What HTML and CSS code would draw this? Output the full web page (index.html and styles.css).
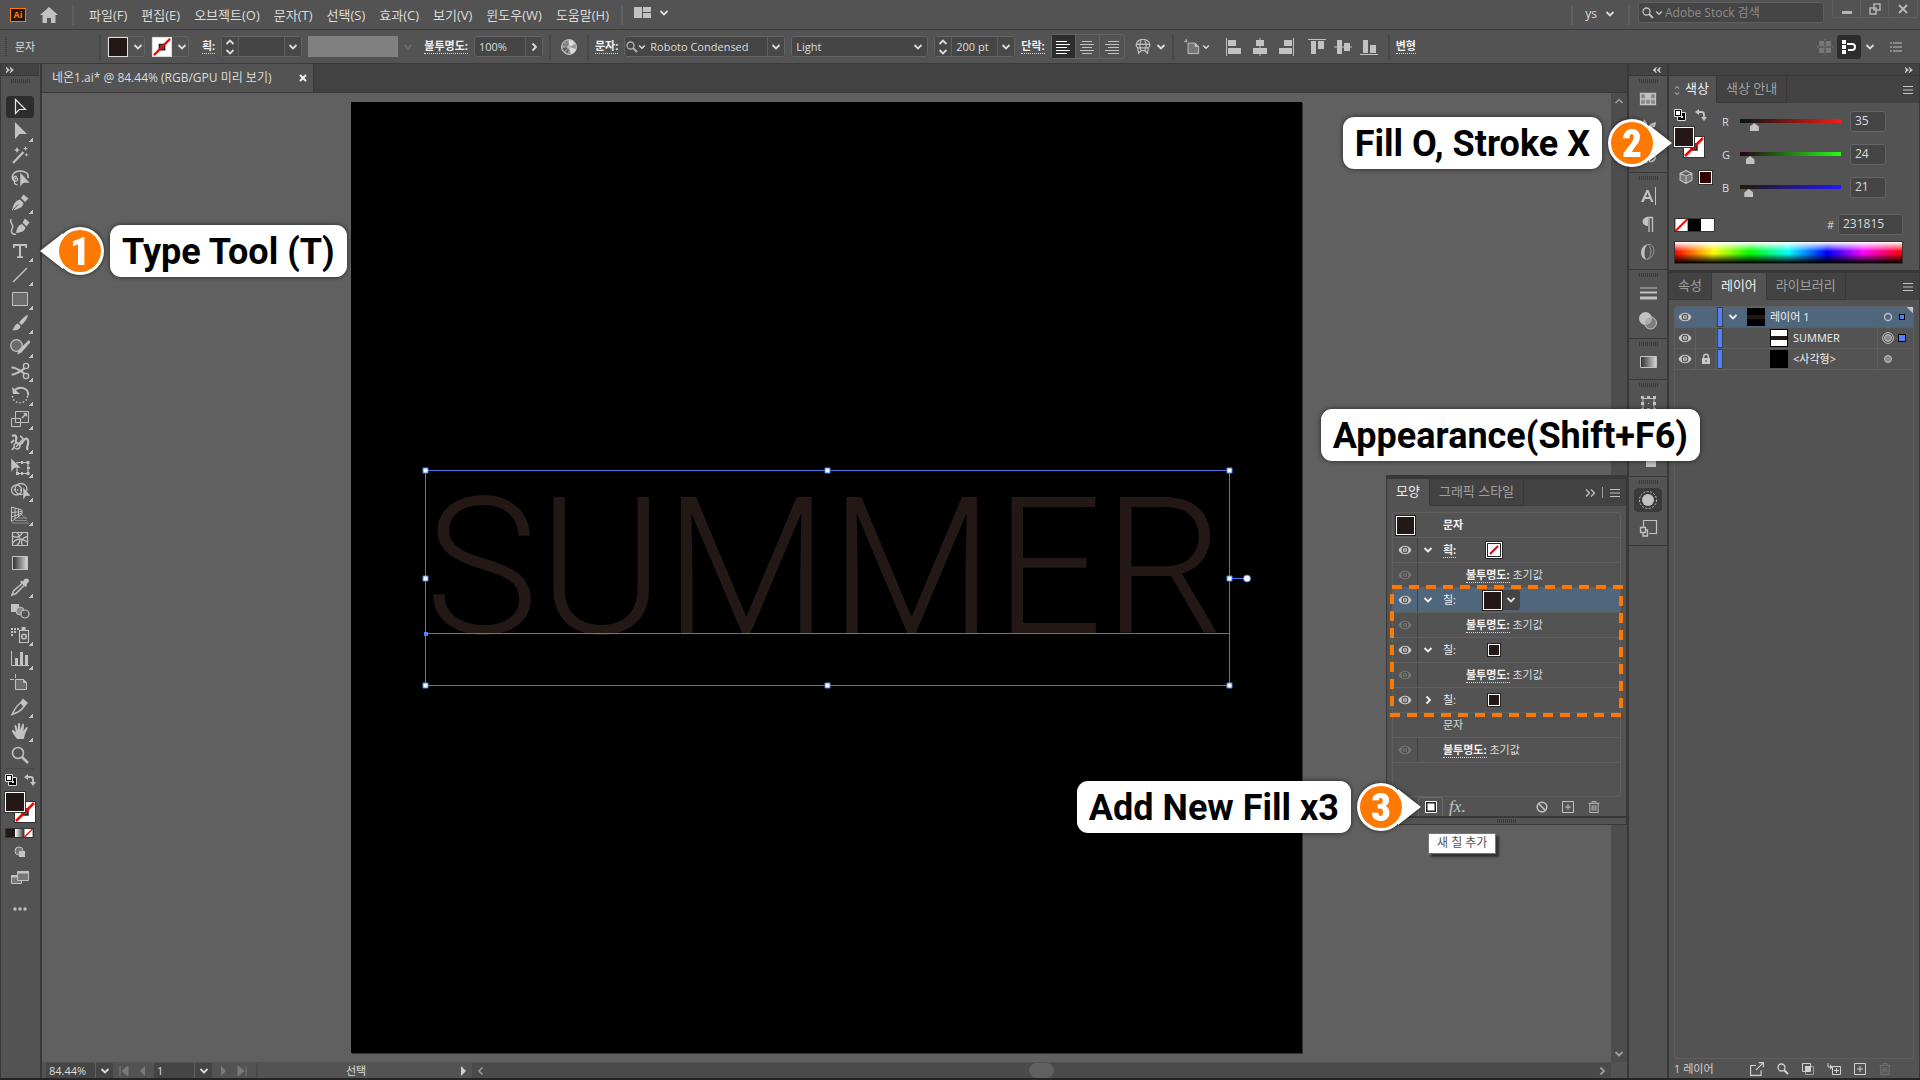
FILE: index.html
```html
<!DOCTYPE html>
<html lang="ko">
<head>
<meta charset="utf-8">
<title>네온1.ai</title>
<link rel="stylesheet" href="styles.css">
</head>
<body>
<svg class="sprite" aria-hidden="true">
  <defs>
    <linearGradient id="g-dark"><stop offset="0" stop-color="#2e2e2e"/><stop offset="1" stop-color="#d8d8d8"/></linearGradient>
  </defs>
  <symbol id="chev" viewBox="0 0 10 10"><path d="M1.500 3l3.500 3.500L8.500 3" fill="none" stroke="currentColor" stroke-width="1.800"/></symbol>
  <symbol id="chev-r" viewBox="0 0 10 10"><path d="M3.500 1.500L7 5 3.500 8.500" fill="none" stroke="currentColor" stroke-width="1.800"/></symbol>
  <symbol id="chev-l" viewBox="0 0 10 10"><path d="M6.500 1.500L3 5l3.500 3.500" fill="none" stroke="currentColor" stroke-width="1.500"/></symbol>
  <symbol id="chev-u" viewBox="0 0 10 10"><path d="M1.500 7L5 3.500 8.500 7" fill="none" stroke="currentColor" stroke-width="1.500"/></symbol>
  <symbol id="updown" viewBox="0 0 10 18"><path d="M1.500 6L5 2.500 8.500 6M1.500 12L5 15.500 8.500 12" fill="none" stroke="currentColor" stroke-width="1.800"/></symbol>
  <symbol id="search" viewBox="0 0 12 12"><circle cx="4.500" cy="4.500" r="3.500" fill="none" stroke="currentColor" stroke-width="1.300"/><path d="M7 7l4 4" stroke="currentColor" stroke-width="2"/></symbol>
  <symbol id="menu" viewBox="0 0 10 8"><path d="M0 .5h10M0 4h10M0 7.500h10" stroke="currentColor"/></symbol>
  <symbol id="dbl-r" viewBox="0 0 8 6"><path d="M0 0l3.500 3L0 6l1.200-3zM4 0l3.500 3L4 6l1.200-3z" fill="currentColor" stroke="currentColor" stroke-width=".5"/></symbol>
  <symbol id="dbl-l" viewBox="0 0 8 6"><path d="M3.500 0L0 3l3.500 3-1.200-3zM7.500 0L4 3l3.500 3-1.200-3z" fill="currentColor" stroke="currentColor" stroke-width=".5"/></symbol>
  <symbol id="eye" viewBox="0 0 14 10"><path d="M.5 5C3-.8 11-.8 13.500 5 11 10.800 3 10.800 .5 5z" fill="currentColor"/><circle cx="7" cy="5" r="3.300" fill="#4a4a4a"/><circle cx="7" cy="5" r="2.200" fill="currentColor"/><path d="M6.500 3.500h1v3h-1z" fill="#4a4a4a"/></symbol>
  <symbol id="lock" viewBox="0 0 10 12"><path d="M1 5h8v6H1z" fill="currentColor"/><path d="M2.700 5V3.500a2.300 2.300 0 0 1 4.600 0V5" fill="none" stroke="currentColor" stroke-width="1.400"/><path d="M4.500 7h1v2h-1z" fill="#444"/></symbol>
  <symbol id="defcol" viewBox="0 0 12 12"><path d="M4.500 4.500h6.500v6.500H4.500z" fill="#fff" stroke="#000" stroke-width="2"/><path d="M3.500 3.500h8v8h-8z" fill="#000" stroke="#ddd"/><path d="M7 7h2v2H7z" fill="#ddd"/><path d="M.5 .5h7v7h-7z" fill="#000" stroke="#ddd"/><path d="M2 2h4v4H2z" fill="#fff"/></symbol>
  <symbol id="swap" viewBox="0 0 12 12"><path d="M3 3h3.500a2.500 2.500 0 0 1 2.500 2.500V9" fill="none" stroke="currentColor" stroke-width="1.800"/><path d="M0 3l4-3v6zM9 12L6 8h6z" fill="currentColor"/></symbol>
  <symbol id="grip" viewBox="0 0 19 4"><path d="M.5 0v4M2.500 0v4M4.500 0v4M6.500 0v4M8.500 0v4M10.500 0v4M12.500 0v4M14.500 0v4M16.500 0v4M18.500 0v4" stroke="#3a3a3a"/></symbol>
  <symbol id="none" viewBox="0 0 20 20"><path d="M0 0h20v20H0z" fill="#fff"/><path d="M7 7h6v6H7z" fill="#535353" stroke="#222" stroke-width="1.500"/><path d="M1 19L19 1" stroke="#f00" stroke-width="2.500"/></symbol>
  <symbol id="slash" viewBox="0 0 12 12"><path d="M0 0h12v12H0z" fill="#fff"/><path d="M0 12L12 0" stroke="#f00" stroke-width="2"/></symbol>
  <symbol id="plusbox" viewBox="0 0 12 12"><path d="M.5 .5h11v11H.5zM6 3v6M3 6h6" fill="none" stroke="currentColor"/></symbol>
  <symbol id="trash" viewBox="0 0 12 13"><path d="M0 2.500h12M4 2V.5h4V2M1.500 3v9.500h9V3M4 4.500v6M6 4.500v6M8 4.500v6" fill="none" stroke="currentColor"/></symbol>
  <!-- drawing tools, 20 x 20 -->
  <symbol id="t1" viewBox="0 0 20 20"><path d="M5.500 2.500v14l3.700-4H15.500z" fill="none" stroke="currentColor" stroke-width="1.200"/></symbol>
  <symbol id="t2" viewBox="0 0 20 20"><path d="M5 1v17l4.500-5H17z" fill="currentColor"/></symbol>
  <symbol id="t3" viewBox="0 0 20 20"><path d="M3 18L13.500 7" stroke="currentColor" stroke-width="2.200"/><path d="M7 2l1 2.200L10 5l-2 1-1 2-1-2-2-1 2-.8zM15.500 1l.7 1.800 1.800.7-1.800.7-.7 1.800-.7-1.800-1.800-.7 1.800-.7zM16.500 8l.6 1.200 1.200.6-1.200.6-.6 1.200-.6-1.200-1.200-.6 1.200-.6z" fill="currentColor"/></symbol>
  <symbol id="t4" viewBox="0 0 20 20"><path d="M4 12C0 7 4 2 10 2s9 3 8 7" fill="none" stroke="currentColor" stroke-width="1.600"/><path d="M7 7.500C4 6.500 2.500 9 4 11s4 1 3.500-1-2.500-1-2.300.3M4.500 12c-.5 3 1 4 3 3.500" fill="none" stroke="currentColor" stroke-width="1.300"/><path d="M10 3v15l3.500-4H20z" fill="currentColor" stroke="#535353" stroke-width=".5"/></symbol>
  <symbol id="t5" viewBox="0 0 20 20"><path d="M2 17.500C3.500 12 4 8.500 10 6.500l3.500 3.500C13 15 8 16 2 17.500z" fill="currentColor"/><path d="M11 5l2.500-3.500 5 4L15 9z" fill="currentColor"/><path d="M3 17l5-5.500" stroke="#535353"/></symbol>
  <symbol id="t6" viewBox="0 0 20 20"><path d="M6 16c1-5 2-7.500 6-9l3.500 3.500C15 14 11 15.500 6 16z" fill="currentColor"/><path d="M12.500 5.500L15 1.500l4.500 4-3 4z" fill="currentColor"/><path d="M1 2c-2 5 4 5 1 10-1.500 3 .5 6 4 5" fill="none" stroke="currentColor" stroke-width="1.400"/></symbol>
  <symbol id="t7" viewBox="0 0 20 20"><path d="M3 3h14v4h-1.500L15 5h-4v10l2 .5V17H7v-1.500l2-.5V5H5l-.5 2H3z" fill="currentColor"/></symbol>
  <symbol id="t8" viewBox="0 0 20 20"><path d="M3 17L17 3" stroke="currentColor" stroke-width="1.500"/></symbol>
  <symbol id="t9" viewBox="0 0 20 20"><path d="M2.500 3.500h15v13h-15z" fill="#6c6c6c" stroke="currentColor"/></symbol>
  <symbol id="t10" viewBox="0 0 20 20"><path d="M17.500 2C19 3 15 9 11.500 12L9 9.500C12 6 16 2 17.500 2z" fill="currentColor"/><path d="M8 10.500l2.500 2.500C10 17 6 18 2 17c2.500-1 2-5.500 6-6.500z" fill="currentColor"/></symbol>
  <symbol id="t11" viewBox="0 0 20 20"><circle cx="6.500" cy="8.500" r="5.800" fill="#6c6c6c" stroke="currentColor" stroke-width="1.300"/><path d="M19 3l1.500 2-9 10.500-4 2 .5-4z" fill="currentColor"/></symbol>
  <symbol id="t12" viewBox="0 0 20 20"><path d="M1.500 6.500c4-.5 7 2 13 6M1.500 13.500c4 .5 7-2 13-6" stroke="currentColor" stroke-width="2" fill="none"/><circle cx="16" cy="5" r="2.600" fill="none" stroke="currentColor" stroke-width="1.400"/><circle cx="16" cy="15" r="2.600" fill="none" stroke="currentColor" stroke-width="1.400"/></symbol>
  <symbol id="t13" viewBox="0 0 20 20"><path d="M4 6c5-6 15-3 14 4.500" fill="none" stroke="currentColor" stroke-width="1.800"/><path d="M2 2l1 7h7z" fill="currentColor"/><path d="M17.500 11c0 9-15 9-15 0" fill="none" stroke="currentColor" stroke-width="1.500" stroke-dasharray="1.500 2"/></symbol>
  <symbol id="t14" viewBox="0 0 20 20"><path d="M5.500 2.500h13v11h-13z" fill="none" stroke="currentColor"/><path d="M1.500 9.500h9v8h-9z" fill="none" stroke="currentColor"/><path d="M12 9l4-4" stroke="currentColor" stroke-width="1.500"/><path d="M13 4h4v4z" fill="currentColor"/></symbol>
  <symbol id="t15" viewBox="0 0 20 20"><path d="M2 3c4-2 5 1 4 4s1 4 4 4 3-4 5-5 4 1 3 5-2 4 0 6" fill="none" stroke="currentColor" stroke-width="2.200"/><path d="M2 17c2-5 6-3 9-6M10 3c3 1 2 3 4 4M4 7L1 10" fill="none" stroke="currentColor" stroke-width="1.800"/><circle cx="7" cy="13" r="3" fill="#535353" stroke="currentColor" stroke-width="1.300"/><path d="M6 14l6-7" stroke="currentColor" stroke-width="1.300"/></symbol>
  <symbol id="t16" viewBox="0 0 20 20"><path d="M7 5.500h11v11H7z" fill="none" stroke="currentColor" stroke-width="1.200"/><path d="M6 15h3v3H6zM16.500 15h3v3h-3zM16.500 4h3v3h-3zM11 15h2v3h-2zM17 10h3v2h-3zM11 4h2v3h-2z" fill="currentColor"/><path d="M1 1v14l3.500-4H11z" fill="currentColor" stroke="#535353" stroke-width=".5"/></symbol>
  <symbol id="t17" viewBox="0 0 20 20"><circle cx="6.500" cy="9" r="5" fill="none" stroke="currentColor" stroke-width="1.300"/><ellipse cx="11" cy="8" rx="6" ry="5.500" fill="none" stroke="currentColor" stroke-width="1.300"/><path d="M4 9h9" stroke="currentColor" stroke-dasharray="1.500 1.500" stroke-width="1.500"/><path d="M13 6v13l3-4h5z" fill="currentColor" stroke="#535353" stroke-width=".5"/></symbol>
  <symbol id="t18" viewBox="0 0 20 20"><path d="M1.500 2v14.500L12 9V5zM5 3v11M8.500 4v7.500M1.500 7.500L12 6.500M1.500 12L12 8" fill="none" stroke="currentColor"/><path d="M8 13h9M5 15.500h12M2 18h17M12 10l5 4" stroke="#8d8d8d"/></symbol>
  <symbol id="t19" viewBox="0 0 20 20"><path d="M2.500 3.500h15v13h-15z" fill="none" stroke="currentColor" stroke-width="1.200"/><path d="M7 3.500c4 4 4 9 0 13M2.500 7c5 3 9-1 10-3.500M2.500 14c5-6 10-4 15-1M12.500 16.500c-3-6 1-8 5-9" fill="none" stroke="currentColor" stroke-width="1.300"/></symbol>
  <symbol id="t20" viewBox="0 0 20 20"><path d="M2.500 3.500h15v13h-15z" fill="url(#g-dark)" stroke="currentColor"/></symbol>
  <symbol id="t21" viewBox="0 0 20 20"><path d="M12 6.500L3.500 14 2 18l4-1.500L14 8.500" fill="none" stroke="currentColor" stroke-width="1.500"/><path d="M10 5l1.500-1.500 1.500 1C14 2 16 .5 18 2s.5 4-1.500 5l.5 1.500L15.500 10z" fill="currentColor"/></symbol>
  <symbol id="t22" viewBox="0 0 20 20"><path d="M1 3h8v8H1z" fill="currentColor"/><circle cx="10" cy="10" r="4" fill="#8a8a8a" stroke="currentColor"/><circle cx="15" cy="13" r="4" fill="#535353" stroke="currentColor" stroke-width="1.200"/></symbol>
  <symbol id="t23" viewBox="0 0 20 20"><path d="M1 3h2v2H1zM4 3h2v2H4zM7 3h2v2H7zM1 6h2v2H1zM4 6h2v2H4zM1 9h2v2H1zM11.500 2h4v3h-4z" fill="currentColor"/><path d="M9.500 5.500h9v12h-9z" fill="none" stroke="currentColor" stroke-width="1.200"/><circle cx="14" cy="11.500" r="2.300" fill="none" stroke="currentColor" stroke-width="1.600"/></symbol>
  <symbol id="t24" viewBox="0 0 20 20"><path d="M1.500 2v14.500H19" fill="none" stroke="currentColor"/><path d="M5 9h3v7H5zM10 3h3v13h-3zM15 6h3v10h-3z" fill="currentColor"/></symbol>
  <symbol id="t25" viewBox="0 0 20 20"><path d="M5.500 6.500h8l3 3v7h-11z" fill="#6c6c6c" stroke="currentColor"/><path d="M13.500 6.500v3h3zM0 6.500h4M5.500 1v4" fill="currentColor" stroke="currentColor"/></symbol>
  <symbol id="t26" viewBox="0 0 20 20"><path d="M11 5.500C6 9 5 12 2 17.500c5-1.500 9-3.500 12-8z" fill="none" stroke="currentColor" stroke-width="1.400"/><path d="M10.500 5L13 1.500l5 4.500-3.500 4z" fill="currentColor"/></symbol>
  <symbol id="t27" viewBox="0 0 20 20"><path d="M7 18C4 14 2 11 2 9.500c1-1 2.500 0 4 2L4.500 5c0-1.500 1.500-1.500 2 0L8 9.500V3c0-1.500 2-1.500 2 0l.5 6L12 3.500c.5-1.500 2-1 2 .5L13.500 10 16 6.500c1-1 2-.5 1.500 1L15 13c-.5 3-1 4-1.500 5z" fill="currentColor"/></symbol>
  <symbol id="t28" viewBox="0 0 20 20"><circle cx="8" cy="8" r="5.500" fill="none" stroke="currentColor" stroke-width="1.500"/><path d="M12 12l6 6" stroke="currentColor" stroke-width="2.500"/></symbol>
  <!-- panel dock icons, 20 x 20 -->
  <symbol id="d1" viewBox="0 0 20 20"><path d="M2.500 4.500h15v11h-15zM2.500 10h15M7.500 4.500v11M12.500 4.500v11" fill="#8a8a8a" stroke="currentColor" stroke-width="1.300"/><path d="M8 5h4v5H8z" fill="currentColor"/></symbol>
  <symbol id="d2" viewBox="0 0 20 20"><path d="M6 2l3 4-1 4-3-4zM12 7l6-2-1 5-5 1zM9 9l2 9H8z" fill="currentColor"/></symbol>
  <symbol id="d3" viewBox="0 0 20 20"><path d="M10 10V4M10 17c-4 1-7-1-5-4s5-1 5 1 3 4 6 1-1-6-4-3" fill="none" stroke="currentColor" stroke-width="1.800"/></symbol>
  <symbol id="d4" viewBox="0 0 20 20"><path d="M3 16L8.500 4h2L15.500 16h-2.500l-1-3H7l-1.200 3zM7.800 11H11L9.500 6.800z" fill="currentColor"/><path d="M17.500 1v18" stroke="currentColor"/></symbol>
  <symbol id="d5" viewBox="0 0 20 20"><path d="M9.500 3.500c-6 0-6 8 0 8z" fill="currentColor" stroke="currentColor"/><path d="M9 3.500h6M11 3.500V18M14.500 3.500V18" fill="none" stroke="currentColor" stroke-width="1.300"/></symbol>
  <symbol id="d6" viewBox="0 0 20 20"><path d="M10 2C1 4 1 17 9 18 5 15 6 5 10 2z" fill="currentColor"/><path d="M10 2.500c8-1 8 13-1 15C14 15 14 5 10 2.500z" fill="none" stroke="#999"/></symbol>
  <symbol id="d7" viewBox="0 0 20 20"><path d="M2 5h17" stroke="currentColor"/><path d="M2 9.500h17" stroke="currentColor" stroke-width="2"/><path d="M2 15h17" stroke="currentColor" stroke-width="3"/></symbol>
  <symbol id="d8" viewBox="0 0 20 20"><circle cx="7.500" cy="7.500" r="6.500" fill="currentColor"/><circle cx="12.500" cy="12" r="6" fill="#999" fill-opacity=".6" stroke="currentColor"/></symbol>
  <symbol id="d9" viewBox="0 0 20 20"><path d="M2.500 4.500h16v11h-16z" fill="url(#g-dark)" stroke="currentColor"/></symbol>
  <symbol id="d10" viewBox="0 0 20 20"><path d="M5 5.500h11v11H5z" fill="none" stroke="currentColor"/><path d="M3 3h3v3H3zM9 3h3v3H9zM15 3h3v3h-3zM3 9h3v3H3zM15 9h3v3h-3zM3 15h3v3H3zM9 15h3v3H9zM15 15h3v3h-3zM10 10h1v1h-1z" fill="currentColor"/></symbol>
  <symbol id="d11" viewBox="0 0 20 20"><path d="M3 3h9v9H3zM8 9h10v9H8z" fill="currentColor"/></symbol>
  <symbol id="d12" viewBox="0 0 20 20"><circle cx="10" cy="10" r="6" fill="currentColor"/><circle cx="10" cy="10" r="8.500" fill="none" stroke="currentColor" stroke-dasharray="2 1.500"/></symbol>
  <symbol id="d13" viewBox="0 0 20 20"><path d="M5.500 9V2.500h13v13H11" fill="none" stroke="currentColor" stroke-width="1.200"/><path d="M2.500 9.500h5v5h-5zM5 14.500v3.500h4.500v-6H8" fill="none" stroke="currentColor" stroke-width="1.300"/></symbol>
</svg>

<header class="menubar">
  <svg class="ai" viewBox="0 0 16 14" role="img" aria-label="Adobe Illustrator"><rect x=".5" y=".5" width="15" height="13" fill="#261300" stroke="#ff7c00"/><text x="8" y="10" text-anchor="middle">Ai</text></svg>
  <button class="plain home" aria-label="홈"><svg viewBox="0 0 18 16"><path d="M9 0l9 8h-2.500v8H11v-5H7v5H2.500V8H0z" fill="#c2c2c2"/></svg></button>
  <span class="rule"></span>
  <nav class="menus">
    <button>파일(F)</button><button>편집(E)</button><button>오브젝트(O)</button><button>문자(T)</button><button>선택(S)</button><button>효과(C)</button><button>보기(V)</button><button>윈도우(W)</button><button>도움말(H)</button>
  </nav>
  <span class="rule"></span>
  <button class="plain arrange" aria-label="문서 정렬"><svg class="w17" viewBox="0 0 17 11"><path d="M0 0h8v11H0zM9 0h8v5H9zM9 6h8v5H9z" fill="#c2c2c2"/></svg><svg class="ic10"><use href="#chev"/></svg></button>
  <span class="grow"></span>
  <span class="rule"></span>
  <button class="plain user">ys <svg class="ic10"><use href="#chev"/></svg></button>
  <span class="rule"></span>
  <label class="stock"><svg class="ic12"><use href="#search"/></svg><svg class="ic8"><use href="#chev"/></svg><input type="text" placeholder="Adobe Stock 검색" aria-label="Adobe Stock 검색"></label>
  <div class="winbtns">
    <button aria-label="최소화"><svg class="ic12" viewBox="0 0 12 12"><path d="M1 8h10v3H1z" fill="#b4b4b4"/></svg></button><button aria-label="복원"><svg class="ic12" viewBox="0 0 12 12"><path d="M5 1h6v6H5zM1 5h6v6H1z" fill="none" stroke="#b4b4b4" stroke-width="1.500"/></svg></button><button aria-label="닫기"><svg class="ic12" viewBox="0 0 12 12"><path d="M2 2l8 8M10 2l-8 8" stroke="#b4b4b4" stroke-width="2"/></svg></button>
  </div>
</header>

<section class="control" aria-label="컨트롤">
  <span class="vgrip"></span>
  <span class="kind">문자</span>
  <span class="rule"></span>
  <button class="swatchdd" aria-label="칠"><span class="chip fillc"></span><svg class="ic10"><use href="#chev"/></svg></button>
  <button class="swatchdd" aria-label="획 색"><svg class="chip"><use href="#none"/></svg><svg class="ic10"><use href="#chev"/></svg></button>
  <label class="dot gapl" for="sw">획:</label>
  <div class="combo"><button class="step" aria-label="획 두께 증감"><svg class="ud"><use href="#updown"/></svg></button><input class="w45" id="sw" type="text"><button aria-label="두께 목록"><svg class="ic10"><use href="#chev"/></svg></button></div>
  <button class="brush" disabled aria-label="브러쉬 정의"><span></span><svg class="ic10"><use href="#chev"/></svg></button>
  <label class="dot" for="op">불투명도:</label>
  <div class="combo"><input class="w50" id="op" type="text" value="100%"><button aria-label="불투명도 슬라이더"><svg class="ic10"><use href="#chev-r"/></svg></button></div>
  <span class="rule"></span>
  <button class="plain globe" aria-label="아트웍 색상 변경"><svg class="ic16" viewBox="0 0 16 16"><circle cx="8" cy="8" r="7.500" fill="#9a9a9a" stroke="#c2c2c2"/><path d="M8 8L8 1a7 7 0 0 1 6 4zM8 8l7 2a7 7 0 0 1-5 5z" fill="#dcdcdc"/><path d="M8 8l-5 4a7 7 0 0 1-1-3zM8 8l-1 6-2-1z" fill="#555"/><path d="M8 8L2 5M8 8L5 2" stroke="#666"/><circle cx="8" cy="8" r="2" fill="#bbb"/></svg></button>
  <span class="rule"></span>
  <label class="dot" for="ff">문자:</label>
  <div class="combo"><svg class="ic12 lead"><use href="#search"/></svg><svg class="ic8"><use href="#chev"/></svg><input class="w121" id="ff" type="text" value="Roboto Condensed"><button aria-label="글꼴 목록"><svg class="ic10"><use href="#chev"/></svg></button></div>
  <div class="combo"><select class="w117" aria-label="글꼴 스타일"><option>Light</option></select><svg class="ic10 tail"><use href="#chev"/></svg></div>
  <div class="combo"><button class="step" aria-label="글꼴 크기 증감"><svg class="ud"><use href="#updown"/></svg></button><input class="w45" type="text" value="200 pt" aria-label="글꼴 크기"><button aria-label="크기 목록"><svg class="ic10"><use href="#chev"/></svg></button></div>
  <button class="plain dot">단락:</button>
  <div class="aligns">
    <button class="on" aria-label="왼쪽 정렬"><svg class="ic16" viewBox="0 0 16 16"><path d="M1 2.500h11M1 5.500h14M1 8.500h11M1 11.500h14M1 14.500h11" stroke="currentColor"/></svg></button><button aria-label="가운데 정렬"><svg class="ic16" viewBox="0 0 16 16"><path d="M3 2.500h10M1 5.500h14M3 8.500h10M1 11.500h14M3 14.500h10" stroke="currentColor"/></svg></button><button aria-label="오른쪽 정렬"><svg class="ic16" viewBox="0 0 16 16"><path d="M4 2.500h11M1 5.500h14M4 8.500h11M1 11.500h14M4 14.500h11" stroke="currentColor"/></svg></button>
  </div>
  <button class="plain pair envelope" aria-label="둘러싸기"><svg class="ic16" viewBox="0 0 18 18"><path d="M4 2c3-2 7-2 10 0 4 3 3 6 1 8l-1 6-3-3H7l-3 3-1-6C1 8 0 5 4 2zM7 2c-2 3-2 7 0 11M11 2c2 3 2 7 0 11M1.500 6h15M3 10h12" fill="none" stroke="#c2c2c2" stroke-width="1.300"/></svg><svg class="ic10"><use href="#chev"/></svg></button>
  <span class="rule"></span>
  <button class="plain pair tight" aria-label="아트보드"><svg class="ic16" viewBox="0 0 18 18"><path d="M4.500 4.500h8l4 4v8h-12z" fill="#777" stroke="#c2c2c2"/><path d="M12.500 4.500v4h4zM0 2.500h4M2.500 0v4" fill="#c2c2c2" stroke="#c2c2c2"/></svg><svg class="ic8"><use href="#chev"/></svg></button>
  <div class="arranges">
    <button class="plain" aria-label="가로 왼쪽 정렬"><svg class="ic18" viewBox="0 0 18 18"><path d="M1.500 0v18" stroke="#c2c2c2"/><path d="M3 2h8v6H3zM3 10h13v6H3z" fill="#c2c2c2"/></svg></button>
    <button class="plain" aria-label="가로 가운데 정렬"><svg class="ic18" viewBox="0 0 18 18"><path d="M9 0v18" stroke="#c2c2c2"/><path d="M5 2h8v6H5zM2 10h14v6H2z" fill="#c2c2c2"/></svg></button>
    <button class="plain" aria-label="가로 오른쪽 정렬"><svg class="ic18" viewBox="0 0 18 18"><path d="M16.500 0v18" stroke="#c2c2c2"/><path d="M7 2h8v6H7zM2 10h13v6H2z" fill="#c2c2c2"/></svg></button>
    <button class="plain sp" aria-label="세로 위 정렬"><svg class="ic18" viewBox="0 0 18 18"><path d="M0 1.500h18" stroke="#c2c2c2"/><path d="M3 3h5v13H3zM10 3h6v8h-6z" fill="#c2c2c2"/></svg></button>
    <button class="plain" aria-label="세로 가운데 정렬"><svg class="ic18" viewBox="0 0 18 18"><path d="M0 9h18" stroke="#c2c2c2"/><path d="M3 2h5v14H3zM10 5h6v8h-6z" fill="#c2c2c2"/></svg></button>
    <button class="plain" aria-label="세로 아래 정렬"><svg class="ic18" viewBox="0 0 18 18"><path d="M0 16.500h18" stroke="#c2c2c2"/><path d="M3 2h5v13H3zM10 7h6v8h-6z" fill="#c2c2c2"/></svg></button>
  </div>
  <span class="rule"></span>
  <button class="plain dot">변형</button>
  <span class="grow"></span>
  <div class="ends">
    <button class="plain" aria-label="픽셀에 정렬"><svg class="ic16" viewBox="0 0 16 16"><path d="M2 2h5v5H2zM9 2h5v5H9zM2 9h5v5H2zM9 9h5v5H9z" fill="#777"/><path d="M8 0v16M0 8h16" stroke="#777" stroke-dasharray="2 1"/></svg></button>
    <button class="snap" aria-label="픽셀 물리기"><svg class="ic16" viewBox="0 0 16 16"><path d="M1 1h4v4H1zM1 6h4v4H1zM1 11h4v4H1z" fill="#fff"/><path d="M6 5h5a3 3 0 0 1 0 6H7" fill="none" stroke="#fff" stroke-width="2"/></svg></button>
    <svg class="ic10"><use href="#chev"/></svg>
    <button class="plain lists" aria-label="컨트롤 메뉴"><svg class="ic12" viewBox="0 0 12 12"><path d="M3 2h9M3 6h9M3 10h9M0 2h2M0 6h2M0 10h2" stroke="#c2c2c2" stroke-width="1.200"/></svg></button>
  </div>
</section>

<main class="work">
  <aside class="toolbar" aria-label="도구">
    <div class="strip"><svg class="dbl"><use href="#dbl-r"/></svg></div>
    <svg class="grip"><use href="#grip"/></svg>
    <div class="tools">
      <button class="on" aria-label="선택"><svg><use href="#t1"/></svg></button>
      <button class="more" aria-label="직접 선택"><svg><use href="#t2"/></svg></button>
      <button aria-label="자동 선택"><svg><use href="#t3"/></svg></button>
      <button aria-label="올가미"><svg><use href="#t4"/></svg></button>
      <button class="more" aria-label="펜"><svg><use href="#t5"/></svg></button>
      <button aria-label="곡률"><svg><use href="#t6"/></svg></button>
      <button class="more" aria-label="문자"><svg><use href="#t7"/></svg></button>
      <button class="more" aria-label="선분"><svg><use href="#t8"/></svg></button>
      <button class="more" aria-label="사각형"><svg><use href="#t9"/></svg></button>
      <button class="more" aria-label="페인트브러쉬"><svg><use href="#t10"/></svg></button>
      <button class="more" aria-label="모양"><svg><use href="#t11"/></svg></button>
      <button class="more" aria-label="가위"><svg><use href="#t12"/></svg></button>
      <button class="more" aria-label="회전"><svg><use href="#t13"/></svg></button>
      <button class="more" aria-label="크기 조절"><svg><use href="#t14"/></svg></button>
      <button class="more" aria-label="퍼펫 뒤틀기"><svg><use href="#t15"/></svg></button>
      <button class="more" aria-label="자유 변형"><svg><use href="#t16"/></svg></button>
      <button class="more" aria-label="도형 구성"><svg><use href="#t17"/></svg></button>
      <button class="more" aria-label="원근감 격자"><svg><use href="#t18"/></svg></button>
      <button aria-label="망"><svg><use href="#t19"/></svg></button>
      <button aria-label="그라디언트"><svg><use href="#t20"/></svg></button>
      <button class="more" aria-label="스포이드"><svg><use href="#t21"/></svg></button>
      <button aria-label="블렌드"><svg><use href="#t22"/></svg></button>
      <button class="more" aria-label="심볼 분무기"><svg><use href="#t23"/></svg></button>
      <button class="more" aria-label="그래프"><svg><use href="#t24"/></svg></button>
      <button aria-label="대지"><svg><use href="#t25"/></svg></button>
      <button class="more" aria-label="분할"><svg><use href="#t26"/></svg></button>
      <button class="more" aria-label="손"><svg><use href="#t27"/></svg></button>
      <button aria-label="돋보기"><svg><use href="#t28"/></svg></button>
    </div>
    <div class="colors">
      <div class="colortop"><svg class="ic12"><use href="#defcol"/></svg><svg class="ic12"><use href="#swap"/></svg></div>
      <div class="stack"><span class="fillc"></span><svg><use href="#none"/></svg></div>
      <div class="modes"><span class="fillc"></span><span class="gradc"></span><svg><use href="#slash"/></svg></div>
    </div>
    <button class="plain foot" aria-label="그리기 모드"><svg class="ic12" viewBox="0 0 12 12"><circle cx="5" cy="5" r="4" fill="#777" stroke="#c2c2c2"/><path d="M5 5h6v6H5z" fill="#c2c2c2"/></svg></button>
    <button class="plain foot" aria-label="화면 모드"><svg class="ic18" viewBox="0 0 18 18"><path d="M.5 7.500h10v8H.5z" fill="#777" stroke="#c2c2c2"/><path d="M6.500 3.500h11v9h-11z" fill="#777" stroke="#c2c2c2"/><path d="M6 4.500h12M0 8.500h6" stroke="#c2c2c2" stroke-width="2"/></svg></button>
    <button class="plain foot dots" aria-label="도구 모음 편집"><svg class="ic16" viewBox="0 0 16 16"><circle cx="3" cy="8" r="1.700" fill="#c2c2c2"/><circle cx="8" cy="8" r="1.700" fill="#c2c2c2"/><circle cx="13" cy="8" r="1.700" fill="#c2c2c2"/></svg></button>
  </aside>

  <section class="doc">
    <div class="tabs"><button class="doctab">네온1.ai* @ 84.44% (RGB/GPU 미리 보기)<svg class="ic8" viewBox="0 0 8 8"><path d="M1 1l6 6M7 1L1 7" stroke="#eee" stroke-width="2"/></svg></button></div>
    <div class="view">
      <div class="canvas">
        <div class="artboard">
          <div class="sel">
            <div class="neon">SUMMER</div>
            <svg viewBox="0 0 804 215"><g fill="none" stroke="#4676e8"><path d="M.5 .5h804v215H.5zM0 163.500h804M805 108.500h16"/></g><g fill="#fff" stroke="#4f80ff"><path d="M-2 -2h5v5h-5zM400 -2h5v5h-5zM802 -2h5v5h-5zM-2 106h5v5h-5zM802 106h5v5h-5zM-2 213h5v5h-5zM400 213h5v5h-5zM802 213h5v5h-5z"/><circle cx="822" cy="108.500" r="3.500"/></g><path d="M-1 162h4v4h-4z" fill="#4f80ff"/></svg>
          </div>
        </div>
      </div>
      <div class="vscroll"><svg class="ic10"><use href="#chev-u"/></svg><svg class="ic10"><use href="#chev"/></svg></div>
    </div>
    <div class="status">
      <div class="sfield"><input class="w49" type="text" value="84.44%" aria-label="확대/축소"><button aria-label="배율 목록"><svg class="ic10"><use href="#chev"/></svg></button></div>
      <div class="pager off"><svg class="ic10" viewBox="0 0 10 10"><path d="M1 0v10M9 0v10L3 5z" fill="currentColor" stroke="currentColor"/></svg><svg class="ic10" viewBox="0 0 10 10"><path d="M7 0v10L2 5z" fill="currentColor"/></svg></div>
      <div class="sfield"><input class="w40" type="text" value="1" aria-label="대지"><button aria-label="대지 목록"><svg class="ic10"><use href="#chev"/></svg></button></div>
      <div class="pager off"><svg class="ic10" viewBox="0 0 10 10"><path d="M3 0v10l5-5z" fill="currentColor"/></svg><svg class="ic10" viewBox="0 0 10 10"><path d="M9 0v10M1 0v10l6-5z" fill="currentColor" stroke="currentColor"/></svg></div>
      <span class="mode">선택</span>
      <button class="plain play" aria-label="상태 표시"><svg class="ic10" viewBox="0 0 10 10"><path d="M3 0v10l5-5z" fill="#d0d0d0"/></svg></button>
      <div class="hscroll"><svg class="ic10"><use href="#chev-l"/></svg><span class="thumb"></span><svg class="ic10"><use href="#chev-r"/></svg></div>
      <span class="corner"></span>
    </div>

    <section class="appear" aria-label="모양">
      <div class="ptabs"><button class="on">모양</button><button>그래픽 스타일</button><span class="grow"></span><svg class="ic12 hd" viewBox="0 0 12 12"><path d="M2 2.500L5.500 6 2 9.500M7 2.500L10.500 6 7 9.500" fill="none" stroke="#c2c2c2" stroke-width="1.300"/></svg><span class="bar"></span><svg class="mn"><use href="#menu"/></svg></div>
      <ul class="attrs">
        <li class="head"><span class="eye"><span class="big fillc"></span></span><b class="main">문자</b></li>
        <li><span class="eye"><svg><use href="#eye"/></svg></span><span class="tw"><svg class="ic10"><use href="#chev"/></svg></span><span class="main dot">획:</span><svg class="mid none" viewBox="0 0 18 18"><path d="M.5 .5h17v17H.5z" fill="#fff" stroke="#222"/><path d="M2.500 2.500h13v13h-13z" fill="none" stroke="#222"/><path d="M5 13l8-8" stroke="#d0021b" stroke-width="2"/></svg></li>
        <li><span class="eye dim"><svg><use href="#eye"/></svg></span><span class="sub"><b class="dot">불투명도:</b> 초기값</span></li>
        <li class="on"><span class="eye"><svg><use href="#eye"/></svg></span><span class="tw"><svg class="ic10"><use href="#chev"/></svg></span><span class="main">칠:</span><button class="pick" aria-label="칠 색상"><span class="big fillc"></span><svg class="ic10"><use href="#chev"/></svg></button></li>
        <li><span class="eye dim"><svg><use href="#eye"/></svg></span><span class="sub"><b class="dot">불투명도:</b> 초기값</span></li>
        <li><span class="eye"><svg><use href="#eye"/></svg></span><span class="tw"><svg class="ic10"><use href="#chev"/></svg></span><span class="main">칠:</span><span class="mid fillc"></span></li>
        <li><span class="eye dim"><svg><use href="#eye"/></svg></span><span class="sub"><b class="dot">불투명도:</b> 초기값</span></li>
        <li><span class="eye"><svg><use href="#eye"/></svg></span><span class="tw"><svg class="ic10"><use href="#chev-r"/></svg></span><span class="main">칠:</span><span class="mid fillc"></span></li>
        <li class="bare"><span class="eye"></span><span class="tw"></span><span>문자</span></li>
        <li><span class="eye dim"><svg><use href="#eye"/></svg></span><span class="tw"></span><span><b class="dot">불투명도:</b> 초기값</span></li>
      </ul>
      <div class="afoot">
        <button class="plain addstroke" aria-label="새 획 추가"></button><button class="addfill" aria-label="새 칠 추가"><svg class="ic12" viewBox="0 0 12 12"><path d="M.5 .5h11v11H.5z" fill="#222" stroke="#fff"/><path d="M2.500 2.500h7v7h-7z" fill="#fff"/></svg></button><button class="plain fx"><i>fx</i>.</button><span class="grow"></span>
        <button class="plain" aria-label="모양 지우기"><svg class="ic12" viewBox="0 0 12 12"><circle cx="6" cy="6" r="4.800" fill="none" stroke="#c2c2c2" stroke-width="1.500"/><path d="M2.500 2.500l7 7" stroke="#c2c2c2" stroke-width="1.500"/></svg></button>
        <button class="plain" aria-label="항목 복제"><svg class="ic12"><use href="#plusbox"/></svg></button>
        <button class="plain" aria-label="항목 삭제"><svg class="ic12"><use href="#trash"/></svg></button>
      </div>
      <div class="agrip"><svg class="grip"><use href="#grip"/></svg></div>
      <svg class="marker"><rect x="2" y="2" width="229" height="128" fill="none" stroke="#ff7900" stroke-width="4" stroke-dasharray="10 7"/></svg>
      <div class="tip" role="tooltip">새 칠 추가</div>
    </section>
  </section>

  <aside class="dock" aria-label="패널 아이콘">
    <div class="strip"><svg class="dbl"><use href="#dbl-l"/></svg></div>
    <div class="dgroup"><svg class="grip"><use href="#grip"/></svg><button aria-label="견본"><svg><use href="#d1"/></svg></button><button aria-label="브러쉬"><svg><use href="#d2"/></svg></button><button aria-label="심볼"><svg><use href="#d3"/></svg></button></div>
    <div class="dgroup"><svg class="grip"><use href="#grip"/></svg><button aria-label="문자"><svg><use href="#d4"/></svg></button><button aria-label="단락"><svg><use href="#d5"/></svg></button><button aria-label="OpenType"><svg><use href="#d6"/></svg></button></div>
    <div class="dgroup"><svg class="grip"><use href="#grip"/></svg><button aria-label="획"><svg><use href="#d7"/></svg></button><button aria-label="투명도"><svg><use href="#d8"/></svg></button></div>
    <div class="dgroup"><svg class="grip"><use href="#grip"/></svg><button aria-label="그라디언트"><svg><use href="#d9"/></svg></button></div>
    <div class="dgroup"><svg class="grip"><use href="#grip"/></svg><button aria-label="변형"><svg><use href="#d10"/></svg></button><button aria-label="정렬"><svg><use href="#d7"/></svg></button><button aria-label="패스파인더"><svg><use href="#d11"/></svg></button></div>
    <div class="dgroup"><svg class="grip"><use href="#grip"/></svg><button class="on" aria-label="모양"><svg><use href="#d12"/></svg></button><button aria-label="에셋 내보내기"><svg><use href="#d13"/></svg></button></div>
  </aside>

  <aside class="panels">
    <div class="strip end"><svg class="dbl"><use href="#dbl-r"/></svg></div>
    <section class="panel" aria-label="색상">
      <div class="ptabs"><button class="on colortab"><svg class="ud"><use href="#updown"/></svg>색상</button><button>색상 안내</button><span class="grow"></span><svg class="mn"><use href="#menu"/></svg></div>
      <div class="color">
        <div class="mix">
          <div class="chips">
            <div class="colortop"><svg class="ic12"><use href="#defcol"/></svg><svg class="ic12"><use href="#swap"/></svg></div>
            <div class="stack"><span class="fillc"></span><svg><use href="#none"/></svg></div>
            <div class="gamut"><svg class="ic14" viewBox="0 0 12 13"><path d="M6 .5l5.500 2.500v6.500L6 12.500.5 9.500V3zM.5 3L6 5.500 11.500 3M6 5.500v7" fill="#777" stroke="#c2c2c2"/></svg><span class="web"></span></div>
          </div>
          <div class="sliders">
            <div class="srow"><label for="r">R</label><input class="red" id="r" type="range" min="0" max="255" value="35"><input type="text" value="35" aria-label="R 값"></div>
            <div class="srow"><label for="g">G</label><input class="green" id="g" type="range" min="0" max="255" value="24"><input type="text" value="24" aria-label="G 값"></div>
            <div class="srow"><label for="b">B</label><input class="blue" id="b" type="range" min="0" max="255" value="21"><input type="text" value="21" aria-label="B 값"></div>
          </div>
        </div>
        <div class="hexrow"><span class="three"><svg><use href="#slash"/></svg><i class="k"></i><i class="w"></i></span><span class="grow"></span><label for="hex">#</label><input id="hex" type="text" value="231815"></div>
        <div class="spectrum"></div>
      </div>
    </section>
    <section class="panel layers" aria-label="레이어">
      <div class="ptabs"><button>속성</button><button class="on">레이어</button><button>라이브러리</button><span class="grow"></span><svg class="mn"><use href="#menu"/></svg></div>
      <ul class="tree">
        <li class="on"><span class="le"><svg><use href="#eye"/></svg></span><span class="lk"></span><span class="bluebar"></span><span class="nm"><svg class="ic10"><use href="#chev"/></svg><i class="th art"></i>레이어 1</span><span class="tg"><svg class="ic12" viewBox="0 0 12 12"><circle cx="6" cy="6" r="3.500" fill="none" stroke="#c2c2c2" stroke-width="1.300"/></svg><i class="sq sm"></i></span></li>
        <li><span class="le"><svg><use href="#eye"/></svg></span><span class="lk"></span><span class="bluebar"></span><span class="nm in"><i class="th wh"></i>SUMMER</span><span class="tg"><svg class="ic12" viewBox="0 0 12 12"><circle cx="6" cy="6" r="5.400" fill="none" stroke="#c2c2c2"/><circle cx="6" cy="6" r="3.400" fill="#8a8a8a" stroke="#c2c2c2"/></svg><i class="sq"></i></span></li>
        <li><span class="le"><svg><use href="#eye"/></svg></span><span class="lk"><svg><use href="#lock"/></svg></span><span class="bluebar"></span><span class="nm in"><i class="th"></i>&lt;사각형&gt;</span><span class="tg"><svg class="ic12" viewBox="0 0 12 12"><circle cx="6" cy="6" r="3.500" fill="#8a8a8a" stroke="#c2c2c2"/></svg></span></li>
      </ul>
      <div class="lfoot"><span>1 레이어</span><span class="grow"></span>
        <button class="plain" aria-label="내보내기"><svg class="ic14" viewBox="0 0 12 12"><path d="M5 3H.5v8.500h9V7M5 7l6-6M7.500 .5h4v4" fill="none" stroke="currentColor"/></svg></button>
        <button class="plain" aria-label="찾기"><svg class="ic12"><use href="#search"/></svg></button>
        <button class="plain" aria-label="클리핑 마스크"><svg class="ic12" viewBox="0 0 12 12"><path d="M.5 .5h8v8h-8z" fill="none" stroke="currentColor"/><path d="M3 3h5v5H3z" fill="currentColor"/><path d="M3.500 3.500h8v8h-8z" fill="none" stroke="currentColor" stroke-opacity=".6"/></svg></button>
        <button class="plain" aria-label="하위 레이어"><svg class="ic14" viewBox="0 0 14 12"><path d="M5.500 3.500h8v8h-8zM9.500 5v5M7 7.500h5M1 0v4h3" fill="none" stroke="currentColor"/><path d="M3 1.500L6 4 3 6.500z" fill="currentColor"/></svg></button>
        <button class="plain" aria-label="새 레이어"><svg class="ic12"><use href="#plusbox"/></svg></button>
        <button class="plain" disabled aria-label="삭제"><svg class="ic12"><use href="#trash"/></svg></button>
      </div>
    </section>
  </aside>
</main>

<div class="callout c1"><svg class="pin" viewBox="0 0 65 52"><path d="M0 26L23 8v36z" fill="#fff"/><circle cx="40" cy="26" r="24" fill="#fff"/><circle cx="40" cy="26" r="21" fill="#ff7900"/><text x="40" y="40" text-anchor="middle">1</text></svg><span>Type Tool (T)</span></div>
<div class="callout c2"><span>Fill O, Stroke X</span><svg class="pin" viewBox="0 0 65 52"><path d="M65 26L42 8v36z" fill="#fff"/><circle cx="25" cy="26" r="24" fill="#fff"/><circle cx="25" cy="26" r="21" fill="#ff7900"/><text x="25" y="40" text-anchor="middle">2</text></svg></div>
<div class="callout c3"><span>Appearance(Shift+F6)</span></div>
<div class="callout c4"><span>Add New Fill x3</span><svg class="pin" viewBox="0 0 65 52"><path d="M65 26L42 8v36z" fill="#fff"/><circle cx="25" cy="26" r="24" fill="#fff"/><circle cx="25" cy="26" r="21" fill="#ff7900"/><text x="25" y="40" text-anchor="middle">3</text></svg></div>
</body>
</html>
```
FILE: styles.css
```css
* { box-sizing: border-box; }
html, body { margin: 0; }
body {
  display: flex;
  flex-direction: column;
  height: 100vh;
  position: relative;
  overflow: hidden;
  background: #383838;
  border-bottom: 2px solid #242424;
  color: #dcdcdc;
  font: 11px/16px "Open Sans", "Noto Sans CJK KR", sans-serif;
}
button, input, select { font: inherit; color: inherit; margin: 0; padding: 0; border: 0; background: none; border-radius: 0; outline: 0; }
input { min-width: 0; }
ul { list-style: none; margin: 0; padding: 0; }
svg { display: block; flex: none; }
b { font-weight: 700; color: #f0f0f0; }
.sprite { position: absolute; width: 0; height: 0; }
.plain { display: flex; align-items: center; }
.grow { flex: 1; }
.ic8 { width: 8px; height: 8px; }
.ic10 { width: 10px; height: 10px; }
.ic12 { width: 12px; height: 12px; }
.ic14 { width: 14px; height: 14px; }
.ic16 { width: 16px; height: 16px; }
.ic18 { width: 18px; height: 18px; }
.w17 { width: 17px; height: 11px; }
.w40 { width: 40px; }
.w45 { width: 45px; }
.w49 { width: 49px; }
.w50 { width: 50px; }
.w117 { width: 117px; }
.w121 { width: 121px; }
.fillc { background: #231815; }
.rule { width: 2px; height: 26px; background: #484848; flex: none; }
.dot { border-bottom: 1px dotted #d8d8d8; line-height: 14px; white-space: nowrap; color: #f0f0f0; font-weight: 700; }

/* menu bar */
.menubar { display: flex; align-items: center; height: 30px; flex: none; padding-left: 10px; background: #535353; border-bottom: 1px solid #3a3a3a; font-size: 13px; }
.ai { width: 16px; height: 14px; }
.ai text { font: 700 9px "Open Sans", sans-serif; fill: #ff7c00; }
.home { margin: 0 14px; }
.home svg { width: 18px; height: 16px; }
.menubar .rule { height: 20px; background: #5f5f5f; }
.menus { display: flex; gap: 14px; margin: 0 12px 0 15px; }
.menus button { white-space: nowrap; }
.arrange { gap: 8px; margin: 0 0 4px 11px; }
.user { gap: 8px; margin: 0 13px 2px 12px; font-size: 12px; }
.stock { display: flex; align-items: center; gap: 1px; width: 186px; height: 21px; margin: 0 8px 4px 8px; padding: 0 3px; background: #454545; border: 1px solid #5f5f5f; border-radius: 3px; color: #c2c2c2; }
.stock input { flex: 1; margin-left: 1px; font-size: 12px; }
.stock input::placeholder { color: #8c8c8c; }
.winbtns { display: flex; align-self: flex-start; height: 18px; margin-right: 2px; border: 1px solid #5f5f5f; border-top: 0; border-radius: 0 0 3px 3px; }
.winbtns button { display: flex; align-items: center; justify-content: center; width: 28px; border-right: 1px solid #5f5f5f; }
.winbtns button:last-child { border: 0; }

/* control bar */
.control { display: flex; align-items: center; gap: 6px; height: 34px; flex: none; padding: 0 18px 0 5px; background: #535353; border-bottom: 1px solid #3a3a3a; }
.vgrip { width: 2px; height: 20px; background: repeating-linear-gradient(#3a3a3a 0 1px, #535353 1px 2px); }
.kind { width: 80px; padding-left: 2px; }
.swatchdd, .combo, .aligns { display: flex; align-items: center; height: 21px; border: 1px solid #636363; border-radius: 3px; flex: none; }
.swatchdd { width: 38px; gap: 5px; }
.chip { width: 20px; height: 20px; border: 1px solid #ddd; }
.gapl { margin-left: 7px; }
.combo { background: #454545; }
.combo > button { display: flex; align-items: center; justify-content: center; align-self: stretch; width: 17px; background: #484848; border-left: 1px solid #5f5f5f; }
.combo > .step { border: 0; border-right: 1px solid #5f5f5f; }
.combo input, .combo select { height: 19px; padding-left: 4px; appearance: none; }
.combo .lead { margin-left: 1px; color: #b0b0b0; }
.tail { margin: 0 4px; }
.ud { width: 10px; height: 18px; }
.brush { display: flex; align-items: center; width: 108px; height: 21px; gap: 5px; color: #6c6c6c; margin-right: 2px; }
.brush span { width: 90px; height: 21px; background: #808080; }
.globe { margin: 0 4px; }
.aligns { height: 25px; color: #c2c2c2; }
.aligns button { display: flex; align-items: center; justify-content: center; width: 24px; height: 23px; border-right: 1px solid #636363; }
.aligns button:last-child { border: 0; }
.aligns .on { background: #2d2d2d; color: #fff; }
.pair { gap: 5px; margin-left: 4px; }
.tight { gap: 2px; }
.arranges { display: flex; gap: 8px; margin: 0 4px 0 9px; }
.arranges .sp { margin-left: 5px; }
.ends { display: flex; align-items: center; gap: 4px; }
.snap { display: flex; align-items: center; justify-content: center; width: 24px; height: 24px; background: #2d2d2d; border-radius: 3px; }
.lists { margin-left: 11px; }

/* work area */
.work { display: grid; grid-template-columns: 40px 1fr 38px 250px; gap: 2px; flex: 1; min-height: 0; padding-right: 1px; }
.strip { display: flex; align-items: center; justify-content: center; height: 12px; flex: none; background: #424242; border-bottom: 1px solid #383838; color: #d0d0d0; }
.strip.end { justify-content: flex-end; padding-right: 6px; }
.dbl { width: 8px; height: 6px; }
.grip { width: 19px; height: 4px; }

.toolbar { display: flex; flex-direction: column; align-items: center; background: #535353; border-left: 1px solid #3a3a3a; padding-right: 1px; }
.toolbar .strip { width: 100%; justify-content: flex-start; padding-left: 5px; }
.toolbar > .grip { margin: 3px 0 12px; }
.tools { display: flex; flex-direction: column; color: #c2c2c2; padding-bottom: 1px; border-bottom: 1px solid #484848; }
.tools button { position: relative; display: flex; align-items: center; justify-content: center; width: 28px; height: 24px; border: solid transparent; border-width: 1px 0; background-clip: padding-box; border-radius: 4px; }
.tools svg { width: 20px; height: 20px; }
.tools .on { background-color: #2d2d2d; color: #e6e6e6; }
.tools .more::after { content: ""; position: absolute; right: 1px; bottom: 0; width: 4px; height: 4px; background: linear-gradient(135deg, transparent 50%, #c2c2c2 50%); }
.colors { display: flex; flex-direction: column; width: 30px; padding-top: 5px; }
.colortop { display: flex; justify-content: space-between; width: 31px; color: #c2c2c2; }
.stack { display: grid; grid-template-columns: 10px 10px 10px; grid-template-rows: 10px 10px 10px; width: 30px; margin-top: 6px; }
.stack span { grid-area: 1 / 1 / 3 / 3; z-index: 1; border: 1px solid #fff; outline: 1px solid #333; }
.stack svg { grid-area: 2 / 2 / 4 / 4; width: 20px; height: 20px; outline: 1px solid #333; }
.modes { display: flex; width: 29px; height: 10px; margin-top: 6px; border: 1px solid #333; }
.modes > * { width: 9px; height: 8px; }
.gradc { background: linear-gradient(90deg, #fff, #333); }
.foot { margin-top: 8px; }
.foot + .foot { margin-top: 10px; }
.foot.dots { margin-top: 15px; }

/* document */
.doc { position: relative; display: flex; flex-direction: column; min-width: 0; }
.tabs { height: 29px; flex: none; background: #424242; border-bottom: 1px solid #383838; }
.doctab { display: flex; align-items: center; justify-content: space-between; width: 272px; height: 28px; padding: 0 6px 0 10px; background: #535353; border-right: 1px solid #383838; font-size: 12px; white-space: nowrap; }
.view { display: flex; flex: 1; min-height: 0; }
.canvas { display: flex; flex: 1; align-items: center; justify-content: center; background: #606060; overflow: hidden; }
.artboard { position: relative; flex: none; width: 951px; height: 951px; background: #000; box-shadow: 1px 1px 0 #333; }
.sel { position: absolute; left: 74px; top: 368px; width: 805px; height: 215px; }
.sel svg { position: absolute; left: 0; top: 0; width: 804px; height: 215px; overflow: visible; }
.neon { font-family: Roboto, sans-serif; font-weight: 300; font-size: 191px; line-height: 196px; color: #231815; white-space: nowrap; }
.vscroll { display: flex; flex-direction: column; justify-content: space-between; align-items: center; width: 16px; padding: 3px 0; background: #4d4d4d; color: #9c9c9c; }
.status { display: flex; align-items: center; height: 16px; flex: none; padding: 1px 0 0 4px; background: #535353; }
.sfield { display: flex; align-self: stretch; background: #454545; }
.sfield input { padding: 1px 3px 0; }
.sfield button { display: flex; align-items: center; justify-content: center; width: 18px; border-left: 1px solid #5f5f5f; }
.pager { display: flex; gap: 9px; padding: 0 6px; }
.off { color: #7a7a7a; }
.mode { width: 198px; text-align: center; border-left: 2px solid #4a4a4a; margin-left: 3px; }
.play { margin: 0 4px; }
.hscroll { display: flex; flex: 1; align-self: stretch; align-items: center; justify-content: space-between; padding: 0 4px; background: #4a4a4a; color: #9c9c9c; }
.thumb { width: 25px; height: 15px; border-radius: 8px; background: #606060; }
.corner { width: 16px; align-self: stretch; }

/* tab strips shared by panels */
.ptabs { display: flex; align-items: center; height: 27px; flex: none; background: #424242; font-size: 13px; color: #a0a0a0; padding-right: 6px; }
.ptabs button { display: flex; align-items: center; height: 27px; padding: 0 9px 2px; border-right: 1px solid #383838; border-bottom: 1px solid #383838; white-space: nowrap; }
.ptabs .on { background: #535353; color: #f0f0f0; border-bottom-color: #535353; }
.ptabs .colortab { gap: 5px; padding: 0 7px 2px 5px; }
.colortab .ud { width: 6px; height: 11px; color: #a0a0a0; margin-top: 4px; }
.mn { width: 10px; height: 8px; color: #c2c2c2; }

/* floating appearance panel */
.appear { position: absolute; right: 0; top: 411px; width: 241px; display: flex; flex-direction: column; background: #535353; border: 1px solid #383838; border-top-width: 4px; }
.appear .hd { margin-right: 6px; }
.bar { width: 1px; height: 11px; margin-right: 7px; background: #a0a0a0; }
.attrs { margin: 6px 5px 0; height: 285px; border: 1px solid #5f5f5f; border-radius: 3px; }
.attrs li { display: flex; align-items: center; height: 25px; border-bottom: 1px solid #5f5f5f; }
.attrs .on { background: #50667d; }
.eye { display: flex; align-items: center; justify-content: center; width: 25px; align-self: stretch; border-right: 1px solid #424242; color: #c8c8c8; }
.eye svg { width: 14px; height: 10px; }
.eye.dim { color: #757575; }
.head .eye, .bare .eye { border-color: transparent; }
.tw { width: 25px; padding-left: 5px; color: #f0f0f0; }
.attrs .sub { padding-left: 48px; }
.attrs .head .main { margin-left: 25px; }
.attrs .dot { display: inline-block; }
li > .main { width: 42px; color: #f0f0f0; }
li > .main.dot { width: auto; margin-right: 29px; }
.big { width: 19px; height: 19px; border: 1px solid #fff; outline: 1px solid #222; }
.mid { width: 12px; height: 12px; border: 1px solid #fff; outline: 1px solid #222; margin-left: 3px; }
.mid.none { width: 18px; height: 18px; border: 0; outline: 0; margin-left: 0; }
.pick { display: flex; align-items: center; gap: 4px; width: 37px; height: 20px; background: #454545; border-radius: 3px; margin-left: -2px; }
.afoot { display: flex; align-items: center; height: 19px; padding-right: 26px; gap: 14px; color: #c2c2c2; }
.afoot .addstroke { width: 17px; }
.addfill { display: flex; align-items: center; justify-content: center; width: 25px; height: 19px; border: 1px solid #6a6a6a; border-bottom: 0; border-radius: 3px 3px 0 0; }
.fx { font: 17px/18px "Liberation Serif", serif; color: #c2c2c2; margin-left: -8px; }
.agrip { display: flex; align-items: center; justify-content: center; height: 8px; border-top: 2px solid #383838; }
.marker { position: absolute; left: 3px; top: 106px; width: 233px; height: 132px; }
.tip { position: absolute; left: 41px; top: 354px; padding: 0 8px 2px; background: #fff; border: 1px solid #777; box-shadow: 3px 3px 2px #333; color: #555; font-size: 12px; line-height: 17px; white-space: nowrap; }

/* icon dock */
.dock, .panels { display: flex; flex-direction: column; background: #535353; min-height: 0; }
.dock .strip { justify-content: flex-end; padding-right: 6px; }
.dgroup { display: flex; flex-direction: column; align-items: center; padding: 3px 0; border-bottom: 1px solid #383838; color: #c2c2c2; }
.dgroup .grip { margin-bottom: 2px; }
.dgroup button { display: flex; align-items: center; justify-content: center; width: 28px; height: 28px; border: solid transparent; border-width: 2px 0; background-clip: padding-box; border-radius: 5px; }
.dgroup button svg { width: 20px; height: 20px; }
.dgroup .on { background-color: #3a3a3a; }

/* colour panel */
.color { padding: 6px 16px 6px 5px; border-bottom: 3px solid #383838; }
.mix { display: flex; justify-content: space-between; }
.chips { width: 41px; }
.chips .colortop { width: 33px; }
.chips .stack { margin-top: 6px; }
.gamut { display: flex; align-items: center; justify-content: space-between; margin: 13px 3px 0 5px; }
.web { width: 13px; height: 13px; background: #300; border: 1px solid #fff; outline: 1px solid #333; }
.sliders { display: flex; flex-direction: column; gap: 12px; padding: 2px 17px 0 0; }
.srow { display: flex; align-items: center; height: 21px; }
.srow label { width: 14px; }
.srow input[type="text"], #hex { width: 36px; height: 21px; margin-left: 4px; padding: 0 4px 3px; background: #454545; border: 1px solid #636363; border-radius: 3px; font-size: 12px; }
#hex { width: 65px; }
.srow input[type="range"] { appearance: none; align-self: flex-start; width: 110px; height: 12px; margin-top: 8px; background: no-repeat 4px 0 / 101px 4px; }
.srow input::-webkit-slider-thumb { appearance: none; width: 9px; height: 8px; margin-top: 4px; background: #c2c2c2; clip-path: polygon(50% 0, 100% 45%, 100% 100%, 0 100%, 0 45%); }
.srow .red { background-image: linear-gradient(90deg, #001815, #ff1815) !important; }
.srow .green { background-image: linear-gradient(90deg, #230015, #23ff15) !important; }
.srow .blue { background-image: linear-gradient(90deg, #231800, #2318ff) !important; }
.hexrow { display: flex; align-items: center; height: 21px; margin: 16px 0 6px; }
.three { display: flex; height: 14px; border: 1px solid #333; }
.three > * { width: 13px; height: 12px; }
.k { background: #000; }
.w { background: #fff; }
.spectrum { height: 23px; border: 1px solid #333; background: linear-gradient(#fff, rgba(255,255,255,0) 45%, rgba(0,0,0,0) 55%, #000), linear-gradient(90deg, #f00, #ff0 17%, #0f0 33%, #0ff 50%, #00f 67%, #f0f 83%, #f00); }

/* layers panel */
.layers { display: flex; flex-direction: column; flex: 1; min-height: 0; }
.tree { flex: 1; margin: 6px 5px 0; border: 1px solid #5f5f5f; border-radius: 3px; }
.tree li { display: grid; grid-template-columns: 21px 21px 6px 1fr 35px; height: 21px; border-bottom: 1px solid #5f5f5f; }
.tree li > * { display: flex; align-items: center; border-right: 1px solid #606060; }
.tree li > .tg { gap: 4px; padding-left: 4px; border: 0; }
.tree .on { background: linear-gradient(225deg, #c2c2c2 4px, #50667d 5px); color: #f0f0f0; }
.le, .lk { justify-content: center; color: #c8c8c8; }
.le svg { width: 14px; height: 10px; }
.lk svg { width: 10px; height: 12px; }
.tree li > .bluebar { border: 1px solid #424242; background: #4f80ff; }
.nm { gap: 5px; padding-left: 5px; white-space: nowrap; }
.nm .ic10 { margin-right: 4px; }
.nm.in { padding-left: 47px; color: #f0f0f0; }
.th { width: 18px; height: 18px; background: #000; }
.th.wh { background: linear-gradient(#fff 35%, #231815 35% 60%, #fff 60%); border: 1px solid #000; }
.th.art { background: linear-gradient(#000 40%, #231815 40% 60%, #000 60%); }
.sq { width: 8px; height: 8px; background: #4f80ff; border: 1px solid #000; }
.sq.sm { width: 6px; height: 6px; margin-left: 1px; }
.lfoot { display: flex; align-items: center; gap: 13px; height: 19px; padding: 0 28px 0 5px; color: #d0d0d0; }
.lfoot button:disabled { color: #757575; }

/* step callouts laid over the workspace */
.callout { position: absolute; z-index: 5; display: flex; align-items: center; gap: 5px; font: 700 36px/50px Roboto, sans-serif; color: #000; white-space: nowrap; }
.callout span { padding: 2px 12px 0; background: #fff; border-radius: 11px; box-shadow: 0 0 5px rgba(0,0,0,.6); }
.pin { width: 65px; height: 52px; filter: drop-shadow(0 0 2px rgba(0,0,0,.6)); }
.pin text { font: 900 39px "Roboto Condensed", Roboto, sans-serif; fill: #fff; }
.c1 { left: 40px; top: 225px; }
.c2 { right: 248px; top: 117px; }
.c3 { right: 220px; top: 409px; }
.c4 { right: 499px; top: 781px; }
```
